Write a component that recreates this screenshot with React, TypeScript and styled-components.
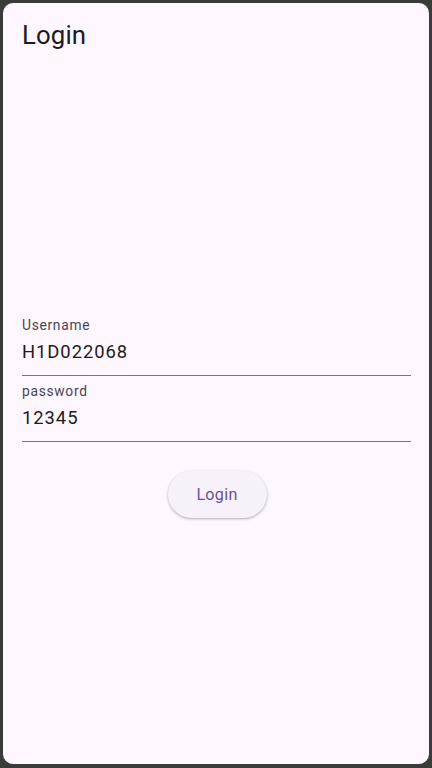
import React from "react";
import styled, { createGlobalStyle } from "styled-components";

const Global = createGlobalStyle`
  html, body { margin: 0; padding: 0; background: #3b3b3b; }
  #root { width: 432px; height: 768px; }
  * { box-sizing: border-box; }
`;

const Frame = styled.div`
  width: 432px;
  height: 768px;
  padding: 3px 3px 4px 3px;
  background: #3b3b3b;
  display: flex;
`;

const Screen = styled.div`
  flex: 1;
  background: #fef7ff;
  border-radius: 10px;
  display: flex;
  flex-direction: column;
  padding: 16px 18px 0 19px;
  font-family: Roboto, "Noto Sans", sans-serif;
  color: #1d1b20;
`;

const Title = styled.h1`
  margin: 0;
  font-size: 25.8px;
  line-height: 33px;
  font-weight: 400;
  letter-spacing: 0.1px;
`;

const Form = styled.div`
  margin-top: 265px;
  display: flex;
  flex-direction: column;
  gap: 7px;
`;

const Field = styled.div`
  display: flex;
  flex-direction: column;
  gap: 7px;
  padding-bottom: 11px;
  border-bottom: 1px solid #79747e;
`;

const Label = styled.div`
  font-size: 13.8px;
  line-height: 16px;
  letter-spacing: 0.7px;
  color: #49454f;
`;

const Value = styled.div`
  font-size: 18.4px;
  line-height: 24px;
  letter-spacing: 0.95px;
  color: #1d1b20;
`;

const ButtonRow = styled.div`
  display: flex;
  justify-content: center;
  margin-top: 22px;
`;

const Button = styled.button`
  width: 99px;
  height: 47px;
  border: none;
  border-radius: 24px;
  background: #f7f2fa;
  color: #6750a4;
  font-family: Roboto, "Noto Sans", sans-serif;
  font-size: 16.1px;
  letter-spacing: 0.3px;
  font-weight: 400;
  box-shadow: 0 1px 2px rgba(0, 0, 0, 0.22), 0 1px 3px 1px rgba(0, 0, 0, 0.08);
  cursor: pointer;
  margin-left: 1px;
`;

export default function App() {
  return (
    <>
      <Global />
      <Frame>
        <Screen>
          <Title>Login</Title>
          <Form>
            <Field>
              <Label>Username</Label>
              <Value>H1D022068</Value>
            </Field>
            <Field>
              <Label>password</Label>
              <Value>12345</Value>
            </Field>
            <ButtonRow>
              <Button>Login</Button>
            </ButtonRow>
          </Form>
        </Screen>
      </Frame>
    </>
  );
}
